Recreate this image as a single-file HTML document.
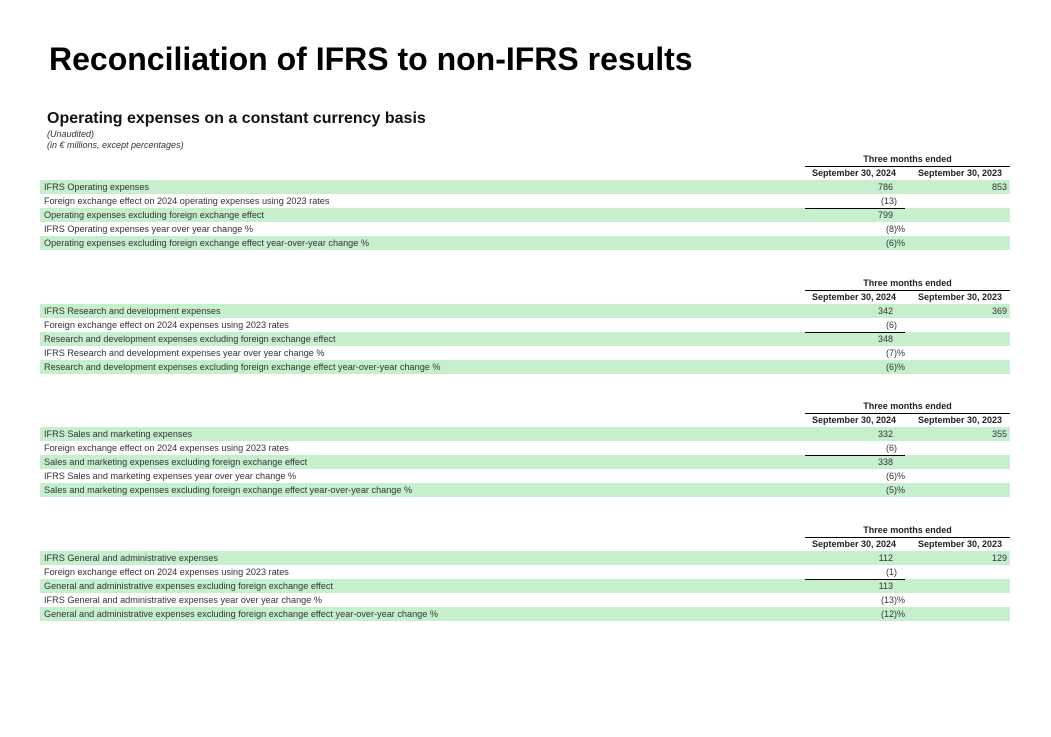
<!DOCTYPE html>
<html><head><meta charset="utf-8"><style>
*{margin:0;padding:0;box-sizing:border-box}
body{width:1051px;height:737px;background:#fff;font-family:"Liberation Sans",Arial,sans-serif;color:#222;position:relative;overflow:hidden}
.a{position:absolute;white-space:nowrap}
h1{position:absolute;left:49px;top:41px;font-size:32px;font-weight:bold;color:#000;white-space:nowrap}
h2{position:absolute;left:47px;top:110px;font-size:16px;font-weight:bold;color:#111}
.it{font-style:italic;font-size:9px;color:#333}
.sec{position:absolute;left:0;width:1051px}
.h3{position:absolute;left:805px;width:205px;text-align:center;font-size:9px;font-weight:bold;top:-6px;border-bottom:1px solid #000;height:13px}
.ch{position:absolute;top:8px;font-size:9px;font-weight:bold;text-align:center;border-bottom:1px solid #000;height:13px}
.row{position:absolute;left:40px;width:970px;height:14px;font-size:9.15px;line-height:14px;padding-left:4px;color:#333;white-space:nowrap}
.row span{font-size:9px}
.g{background:#c6efce}
.v1{position:absolute;right:117px;top:0}
.v2{position:absolute;right:3px;top:0}
.ln{position:absolute;left:805px;width:100px;border-top:1px solid #000}
</style></head><body>
<h1>Reconciliation of IFRS to non-IFRS results</h1>
<h2>Operating expenses on a constant currency basis</h2>
<div class="a it" style="left:47px;top:129px">(Unaudited)</div>
<div class="a it" style="left:47px;top:140px">(in € millions, except percentages)</div>

<div class="sec" style="top:160px">
<div class="h3">Three months ended</div>
<div class="ch" style="left:805px;width:98px">September 30, 2024</div>
<div class="ch" style="left:910px;width:100px">September 30, 2023</div>
<div class="row g" style="top:20px">IFRS Operating expenses<span class="v1">786</span><span class="v2">853</span></div>
<div class="row" style="top:34px">Foreign exchange effect on 2024 operating expenses using 2023 rates<span class="v1" style="right:113px">(13)</span></div>
<div class="row g" style="top:48px">Operating expenses excluding foreign exchange effect<span class="v1">799</span></div>
<div class="row" style="top:62px">IFRS Operating expenses year over year change %<span class="v1" style="right:105px">(8)%</span></div>
<div class="row g" style="top:76px">Operating expenses excluding foreign exchange effect year-over-year change %<span class="v1" style="right:105px">(6)%</span></div>
<div class="ln" style="top:48px"></div>
</div>

<div class="sec" style="top:284px">
<div class="h3">Three months ended</div>
<div class="ch" style="left:805px;width:98px">September 30, 2024</div>
<div class="ch" style="left:910px;width:100px">September 30, 2023</div>
<div class="row g" style="top:20px">IFRS Research and development expenses<span class="v1">342</span><span class="v2">369</span></div>
<div class="row" style="top:34px">Foreign exchange effect on 2024 expenses using 2023 rates<span class="v1" style="right:113px">(6)</span></div>
<div class="row g" style="top:48px">Research and development expenses excluding foreign exchange effect<span class="v1">348</span></div>
<div class="row" style="top:62px">IFRS Research and development expenses year over year change %<span class="v1" style="right:105px">(7)%</span></div>
<div class="row g" style="top:76px">Research and development expenses excluding foreign exchange effect year-over-year change %<span class="v1" style="right:105px">(6)%</span></div>
<div class="ln" style="top:48px"></div>
</div>

<div class="sec" style="top:407px">
<div class="h3">Three months ended</div>
<div class="ch" style="left:805px;width:98px">September 30, 2024</div>
<div class="ch" style="left:910px;width:100px">September 30, 2023</div>
<div class="row g" style="top:20px">IFRS Sales and marketing expenses<span class="v1">332</span><span class="v2">355</span></div>
<div class="row" style="top:34px">Foreign exchange effect on 2024 expenses using 2023 rates<span class="v1" style="right:113px">(6)</span></div>
<div class="row g" style="top:48px">Sales and marketing expenses excluding foreign exchange effect<span class="v1">338</span></div>
<div class="row" style="top:62px">IFRS Sales and marketing expenses year over year change %<span class="v1" style="right:105px">(6)%</span></div>
<div class="row g" style="top:76px">Sales and marketing expenses excluding foreign exchange effect year-over-year change %<span class="v1" style="right:105px">(5)%</span></div>
<div class="ln" style="top:48px"></div>
</div>

<div class="sec" style="top:531px">
<div class="h3">Three months ended</div>
<div class="ch" style="left:805px;width:98px">September 30, 2024</div>
<div class="ch" style="left:910px;width:100px">September 30, 2023</div>
<div class="row g" style="top:20px">IFRS General and administrative expenses<span class="v1">112</span><span class="v2">129</span></div>
<div class="row" style="top:34px">Foreign exchange effect on 2024 expenses using 2023 rates<span class="v1" style="right:113px">(1)</span></div>
<div class="row g" style="top:48px">General and administrative expenses excluding foreign exchange effect<span class="v1">113</span></div>
<div class="row" style="top:62px">IFRS General and administrative expenses year over year change %<span class="v1" style="right:105px">(13)%</span></div>
<div class="row g" style="top:76px">General and administrative expenses excluding foreign exchange effect year-over-year change %<span class="v1" style="right:105px">(12)%</span></div>
<div class="ln" style="top:48px"></div>
</div>
</body></html>
